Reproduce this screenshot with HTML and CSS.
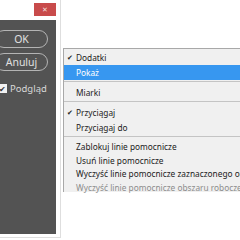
FILE: index.html
```html
<!DOCTYPE html>
<html lang="pl">
<head>
  <meta charset="UTF-8">
  <title>Widok - Pokaż</title>
  <link rel="stylesheet" href="styles.css">
</head>
<body>
  <div class="screen">
    <div class="dialog">
      <div class="titlebar">
        <span class="close">&#x2715;</span>
      </div>
      <div class="panel">
        <div class="btn">OK</div>
        <div class="btn">Anuluj</div>
        <div class="preview">
          <span class="box">&#x2714;</span>
          <span>Podgląd</span>
        </div>
      </div>
    </div>
    <div class="menu">
      <div class="item checked">Dodatki</div>
      <div class="item active">Pokaż</div>
      <div class="sep"></div>
      <div class="item">Miarki</div>
      <div class="sep"></div>
      <div class="item checked">Przyciągaj</div>
      <div class="item">Przyciągaj do</div>
      <div class="sep"></div>
      <div class="item small">Zablokuj linie pomocnicze</div>
      <div class="item small">Usuń linie pomocnicze</div>
      <div class="item small">Wyczyść linie pomocnicze zaznaczonego obszaru roboczego</div>
      <div class="item small disabled">Wyczyść linie pomocnicze obszaru roboczego</div>
    </div>
  </div>
</body>
</html>
```

FILE: styles.css
```css
body {
  margin: 0;
  background-color: #fff;
  font-family: 'Noto Sans', sans-serif;
}
.screen {
  width: 240px;
  height: 240px;
  display: flex;
  align-items: flex-start;
  overflow: hidden;
}
.dialog {
  flex: none;
  width: 61px;
  height: 238px;
  box-sizing: border-box;
  padding: 0 4px 3px 0;
  border-right: 1px solid #dedede;
  border-bottom: 1px solid #dedede;
  display: flex;
  flex-direction: column;
}
.titlebar {
  height: 20px;
  display: flex;
  justify-content: flex-end;
  align-items: flex-start;
}
.close {
  margin-top: 3px;
  width: 22px;
  height: 13px;
  background-color: #c84b4b;
  color: #f4dede;
  font-size: 7px;
  line-height: 13px;
  text-align: center;
}
.panel {
  flex: 1;
  background-color: #535353;
  padding-top: 10px;
  display: flex;
  flex-direction: column;
  gap: 5px;
}
.btn {
  margin-left: -5px;
  width: 53px;
  height: 18px;
  box-sizing: border-box;
  border: 1px solid #b4b4b4;
  border-radius: 9px;
  color: #e0e0e0;
  font-size: 10.5px;
  line-height: 16px;
  text-align: center;
}
.preview {
  margin-top: 6px;
  display: flex;
  align-items: center;
  gap: 3px;
  color: #d8d8d8;
  font-size: 9.5px;
}
.box {
  margin-left: -2px;
  width: 9px;
  height: 9px;
  background-color: #f2f2f2;
  color: #333;
  font-size: 8px;
  line-height: 9px;
  text-align: center;
}
.menu {
  flex: 1;
  margin: 48px 0 0 2px;
  height: 144px;
  box-sizing: border-box;
  padding-top: 1px;
  background-color: #f0f0f0;
  border-top: 1px solid #a8a8a8;
  border-left: 1px solid #a8a8a8;
  font-size: 8.3px;
  color: #222;
}
.item {
  position: relative;
  height: 15px;
  line-height: 15px;
  padding-left: 12px;
  white-space: nowrap;
  overflow: hidden;
}
.item.small {
  height: 13.5px;
  line-height: 13.5px;
}
.item.checked::before {
  content: "\2714";
  position: absolute;
  left: 3px;
  font-size: 7px;
}
.item.active {
  background-color: #3797f0;
  color: #fff;
}
.item.disabled {
  color: #8c8c8c;
}
.sep {
  margin: 1px 0 3px;
  height: 1px;
  background-color: #c4c4c4;
}
```
